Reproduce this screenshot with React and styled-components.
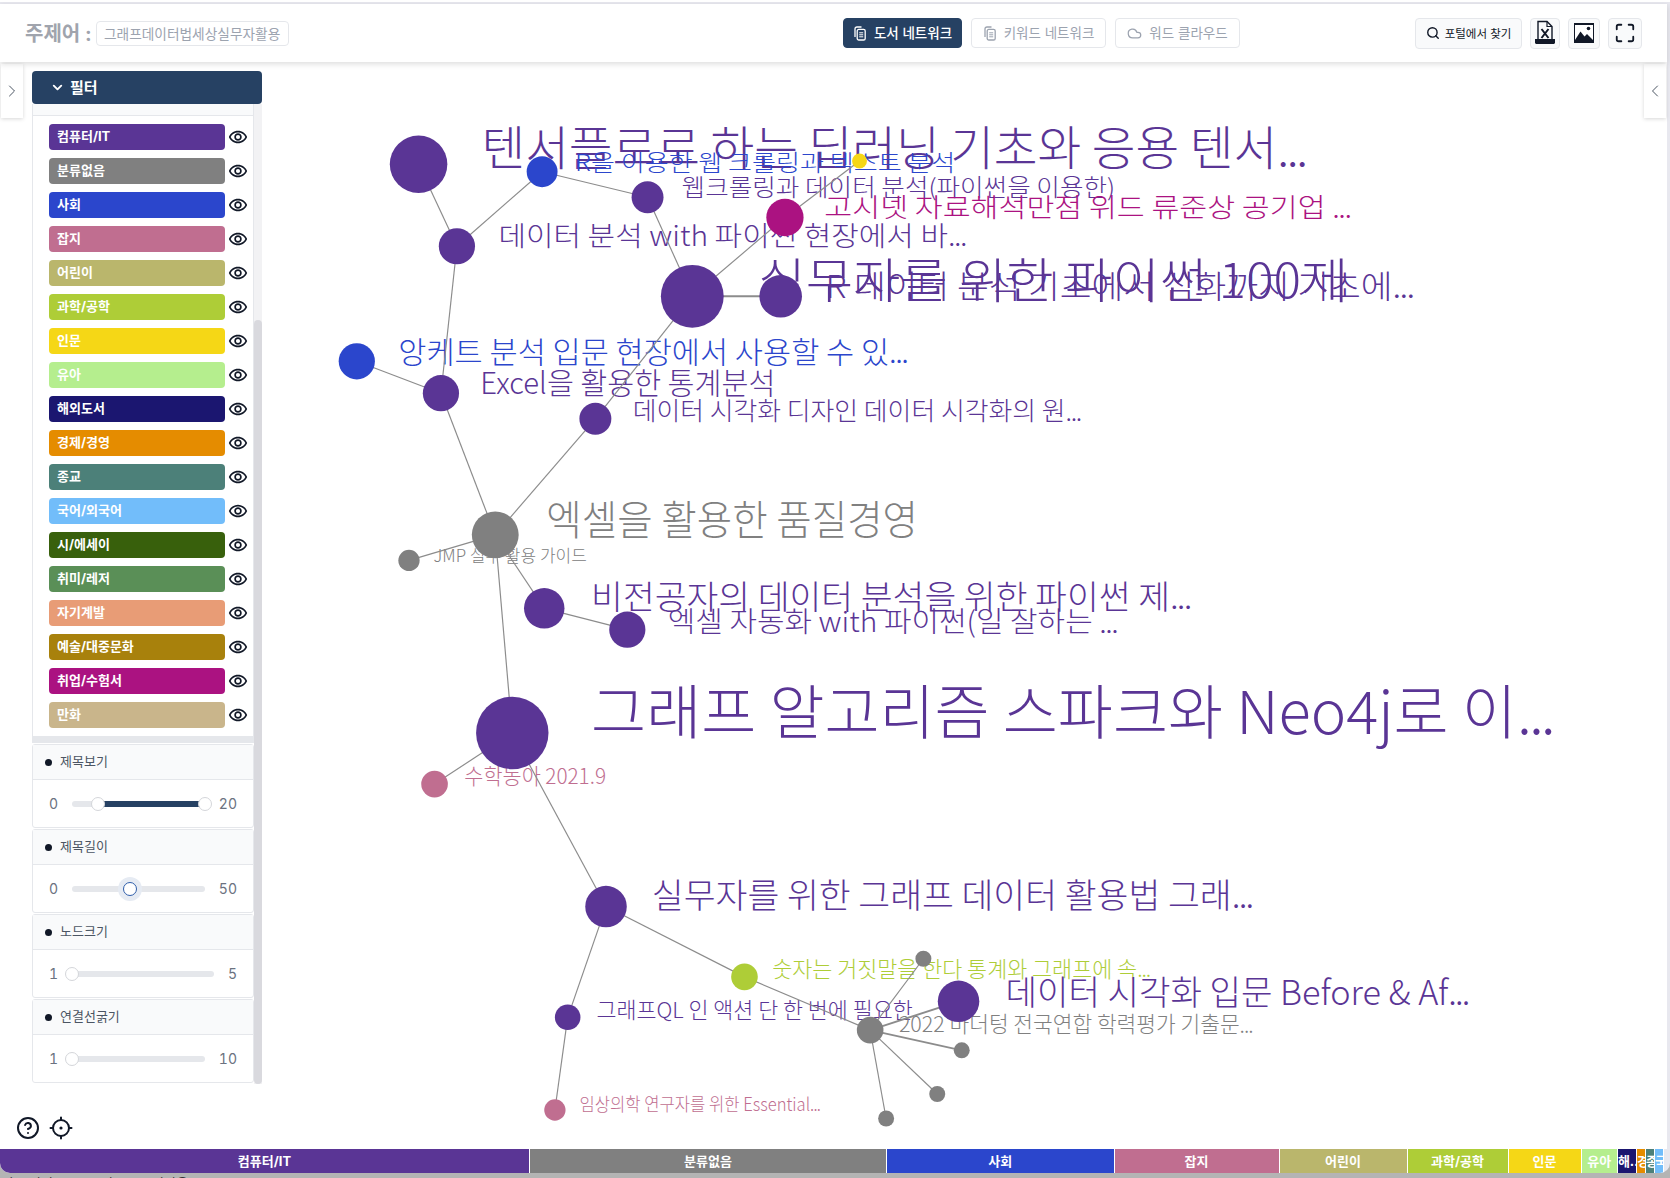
import React from 'react';
import styled, { createGlobalStyle } from 'styled-components';
import { ChevronDown, ChevronLeft, ChevronRight, CircleHelp, Cloud, Maximize, Search } from 'lucide-react';
import { MdOutlineRemoveRedEye } from 'react-icons/md';

const NAVY = '#264163';
const FONT = '"Inter", "Noto Sans CJK KR", sans-serif';

const CATEGORIES = [
  { name: '컴퓨터/IT', color: '#5a3595', width: 530 },
  { name: '분류없음', color: '#808080', width: 357 },
  { name: '사회', color: '#2b46cc', width: 227.5 },
  { name: '잡지', color: '#c06e90', width: 165 },
  { name: '어린이', color: '#bab66c', width: 128 },
  { name: '과학/공학', color: '#aecd37', width: 101 },
  { name: '인문', color: '#f5d716', width: 73 },
  { name: '유아', color: '#b5ee8e', width: 36.4 },
  { name: '해외도서', color: '#1b1670', width: 19 },
  { name: '경제/경영', color: '#e58c00', width: 9 },
  { name: '종교', color: '#4c8079', width: 9 },
  { name: '국어/외국어', color: '#72bdfa', width: 9 },
  { name: '시/에세이', color: '#38600c' },
  { name: '취미/레저', color: '#5a8f57' },
  { name: '자기계발', color: '#e89c76' },
  { name: '예술/대중문화', color: '#a8810c' },
  { name: '취업/수험서', color: '#ab1281' },
  { name: '만화', color: '#c9b58b' },
];

const PURPLE = '#5a3595';
const GRAY = '#808080';
const BLUE = '#2b46cc';
const PINK = '#c06e90';

const NODES = {
  a: [393, 154, 27, PURPLE], b: [429, 231, 17, PURPLE], c: [509, 161, 14.5, BLUE],
  d: [608, 185, 15, PURPLE], e: [650, 278, 29.5, PURPLE], f: [733, 278, 20, PURPLE],
  g: [737, 204, 17.5, '#ab1281'], h: [807, 151, 7, '#f5d716'], i: [335, 339, 17, BLUE],
  j: [414, 369, 17, PURPLE], k: [559, 393, 15, PURPLE], l: [465, 502, 22, GRAY],
  m: [384, 526, 10, GRAY], n: [511, 571, 19, PURPLE], o: [589, 591, 17, PURPLE],
  p: [481, 688, 34, PURPLE], q: [408, 736, 12.5, PINK], r: [569, 851, 19.5, PURPLE],
  s: [699, 917, 12.5, '#aecd37'], t: [533, 955, 12, PURPLE], u: [521, 1042, 10, PINK],
  v: [817, 967, 12.5, GRAY], w: [900, 940, 19.5, PURPLE], x: [867, 900, 7.5, GRAY],
  y: [903, 986, 7.5, GRAY], z: [880, 1027, 7.5, GRAY], aa: [832, 1050, 7.5, GRAY],
};

const EDGES = [
  ['a', 'b'], ['b', 'c'], ['c', 'd'], ['d', 'e'], ['e', 'f', 2], ['e', 'g'], ['g', 'h'], ['b', 'j'],
  ['i', 'j'], ['j', 'l'], ['e', 'k'], ['k', 'l'], ['l', 'm'], ['l', 'n'], ['n', 'o'], ['l', 'p'],
  ['p', 'q'], ['p', 'r'], ['r', 't'], ['t', 'u'], ['r', 's'], ['s', 'v'], ['v', 'w', 1.8],
  ['v', 'x'], ['v', 'y', 1.6], ['v', 'z'], ['v', 'aa'],
];

// x from, x to, vertical centre, font size
const LABELS = [
  ['텐서플로로 하는 딥러닝 기초와 응용 텐서...', 452, 1226, 138, 44, PURPLE],
  ['R을 이용한 웹 크롤링과 텍스트 분석', 540, 897, 152, 21, BLUE],
  ['웹크롤링과 데이터 분석(파이썬을 이용한)', 640, 1047, 176, 22, PURPLE],
  ['고시넷 자료해석만점 위드 류준상 공기업 ...', 774, 1268, 194, 25, '#ab1281'],
  ['데이터 분석 with 파이썬 현장에서 바...', 468, 907, 221, 26, PURPLE],
  ['실무자를 위한 파이썬 100제', 712, 1266, 262, 45, PURPLE],
  ['R 데이터 분석 기초에서 심화까지 기초에...', 775, 1327, 268, 30, PURPLE],
  ['앙케트 분석 입문 현장에서 사용할 수 있...', 374, 852, 330, 28, BLUE],
  ['Excel을 활용한 통계분석', 451, 728, 359, 28, PURPLE],
  ['데이터 시각화 디자인 데이터 시각화의 원...', 594, 1015, 385, 24, PURPLE],
  ['엑셀을 활용한 품질경영', 513, 862, 488, 38, GRAY],
  ['JMP 실무 활용 가이드', 407, 551, 521, 16, GRAY],
  ['비전공자의 데이터 분석을 위한 파이썬 제...', 555, 1118, 560, 31, PURPLE],
  ['엑셀 자동화 with 파이썬(일 잘하는 ...', 627, 1049, 583, 27, PURPLE],
  ['그래프 알고리즘 스파크와 Neo4j로 이...', 555, 1458, 667, 56, PURPLE],
  ['수학동아 2021.9', 436, 569, 728, 20, PINK],
  ['실무자를 위한 그래프 데이터 활용법 그래...', 612, 1176, 840, 32, PURPLE],
  ['숫자는 거짓말을 한다 통계와 그래프에 속...', 725, 1080, 909, 20, '#aecd37'],
  ['데이터 시각화 입문 Before & Af...', 944, 1379, 931, 32, PURPLE],
  ['그래프QL 인 액션 단 한 번에 필요한', 560, 857, 948, 20, PURPLE],
  ['2022 마더텅 전국연합 학력평가 기출문...', 844, 1176, 961, 20, GRAY],
  ['임상의학 연구자를 위한 Essential...', 544, 770, 1036, 17, PINK],
];

const SLIDERS = [
  { title: '제목보기', min: 0, max: 20, from: 19.4, to: 100 },
  { title: '제목길이', min: 0, max: 50, to: 43.8, focused: true },
  { title: '노드크기', min: 1, max: 5, to: 0 },
  { title: '연결선굵기', min: 1, max: 10, to: 0 },
];

const GlobalStyle = createGlobalStyle`
  html, body { margin: 0; height: 100%; }
  body { font-family: ${FONT}; background: #b4b4b4; overflow: hidden; }
  * { box-sizing: border-box; }
`;

const Page = styled.div`
  width: 1670px;
  height: 1178px;
  display: flex;
  flex-direction: column;
  overflow: hidden;
`;

const Frame = styled.div`
  height: 1173px;
  display: flex;
  flex-direction: column;
  background: #e8e8ef;
  border-top: 2px solid #fff;
  padding: 2px 3px 0 0;
  border-radius: 0 0 10px 10px;
  overflow: hidden;
`;

const Header = styled.header`
  height: 58px;
  flex: none;
  display: flex;
  align-items: center;
  padding: 0 25px;
  background: #fff;
  box-shadow: 0 2px 6px rgba(0, 0, 0, 0.14);
  position: relative;
  z-index: 2;
`;

const Title = styled.span`
  font-size: 20px;
  font-weight: 700;
  color: #a0a4ad;
  margin-right: 4px;
  padding-bottom: 2px;
`;

const Chip = styled.span`
  height: 25px;
  width: 193px;
  display: flex;
  align-items: center;
  justify-content: center;
  padding-bottom: 1px;
  border: 1px solid #e5e7eb;
  border-radius: 4px;
  font-size: 13.7px;
  color: #9ca3af;
`;

const TabGroup = styled.div`
  display: flex;
  gap: 9px;
  margin-left: auto;
  margin-right: 175px;
`;

const Tab = styled.button`
  width: ${p => p.$width}px;
  height: 30px;
  padding: 0 0 3px;
  display: flex;
  align-items: center;
  justify-content: center;
  gap: 7px;
  border: 1px solid ${p => (p.$active ? NAVY : '#e5e7eb')};
  border-radius: 4px;
  background: ${p => (p.$active ? NAVY : '#fff')};
  color: ${p => (p.$active ? '#fff' : '#9ca3af')};
  font: ${p => (p.$active ? 500 : 400)} 13.5px ${FONT};

  svg {
    margin-top: 3px;
  }
`;

const Tools = styled.div`
  display: flex;
  gap: 8px;
`;

const ToolButton = styled.button`
  width: ${p => p.$width}px;
  height: 31px;
  padding: 0;
  display: flex;
  align-items: center;
  justify-content: center;
  gap: 5px;
  border: 1px solid #e5e7eb;
  border-radius: 4px;
  background: #f9fafb;
  color: #111827;
  font: 400 11.5px ${FONT};
`;

const Main = styled.main`
  flex: 1;
  min-height: 0;
  display: flex;
  background: #fff;
  position: relative;
`;

const Toggle = styled.div`
  position: absolute;
  top: 2px;
  ${p => (p.$right ? 'right: 1px;' : 'left: 1px;')}
  width: 22px;
  height: 54px;
  display: flex;
  align-items: center;
  justify-content: center;
  background: #fff;
  box-shadow: 0 1px 4px rgba(0, 0, 0, 0.16);
  color: #4b5563;
  z-index: 1;
`;

const Sidebar = styled.aside`
  width: 270px;
  flex: none;
  padding-top: 9px;
  display: flex;
  flex-direction: column;
`;

const FilterBar = styled.div`
  width: 230px;
  height: 33px;
  margin-left: 32px;
  flex: none;
  display: flex;
  align-items: center;
  gap: 5px;
  padding: 0 0 3px 18px;
  background: ${NAVY};
  border-radius: 4px;
  color: #fff;
  font-size: 15px;
  font-weight: 700;

  svg {
    margin-top: 3px;
  }
`;

const ScrollArea = styled.div`
  width: 230px;
  height: 980px;
  margin-left: 32px;
  flex: none;
  display: flex;
`;

const ScrollContent = styled.div`
  width: 222px;
  flex: none;
  display: flex;
  flex-direction: column;
`;

const ScrollTrack = styled.div`
  flex: 1;
  display: flex;
  background: #f2f2f4;
`;

const ScrollThumb = styled.div`
  flex: 1;
  margin-top: 216px;
  background: #d9d9de;
  border-radius: 4px;
`;

const ListHead = styled.div`
  height: 12px;
  flex: none;
  background: #f9fafb;
  border: 1px solid #e5e7eb;
  border-width: 0 1px 1px;
`;

const CategoryList = styled.ul`
  margin: 0 0 1px;
  padding: 8px 0 8px 16px;
  list-style: none;
  display: flex;
  flex-direction: column;
  gap: 8px;
  border: 1px solid #e5e7eb;
  border-width: 0 1px 7px;
`;

const CategoryRow = styled.li`
  display: flex;
  align-items: center;
  gap: 3px;
  color: #111827;
`;

const Pill = styled.span`
  width: 176px;
  height: 26px;
  display: flex;
  align-items: center;
  padding: 0 0 3px 8px;
  border-radius: 4px;
  background: ${p => p.$color};
  color: #fff;
  font-size: 13px;
  font-weight: 700;
`;

const SliderCard = styled.section`
  height: 84px;
  flex: none;
  margin-bottom: 1px;
  border: 1px solid #e5e7eb;
  border-radius: 3px;
  display: flex;
  flex-direction: column;
`;

const SliderHead = styled.div`
  height: 35px;
  flex: none;
  display: flex;
  align-items: center;
  gap: 8px;
  padding-left: 12px;
  background: #f9fafb;
  border-bottom: 1px solid #e5e7eb;
  font-size: 13px;
  color: #4b5563;

  span {
    padding-bottom: 3px;
  }

  &::before {
    content: '';
    width: 7px;
    height: 7px;
    border-radius: 50%;
    background: #111827;
  }
`;

const SliderBody = styled.div`
  flex: 1;
  display: flex;
  align-items: center;
  gap: 14px;
  padding: 0 16px;
  font-size: 14px;
  font-variant-numeric: tabular-nums;
  color: #6b7280;
`;

const Track = styled.div`
  flex: 1;
  height: 6px;
  border-radius: 3px;
  background: #e5e7eb;
  position: relative;
`;

const Range = styled.div`
  position: absolute;
  top: 0;
  bottom: 0;
  background: ${NAVY};
`;

const Knob = styled.div`
  position: absolute;
  top: 50%;
  width: 14px;
  height: 14px;
  border-radius: 50%;
  transform: translate(-50%, -50%);
  background: #fff;
  border: 1px solid ${p => (p.$focused ? '#2f5eaa' : '#d4d6da')};
  box-shadow: ${p => (p.$focused ? '0 0 0 5px #e6ebf3' : 'none')};
`;

const HelpRow = styled.div`
  display: flex;
  align-items: center;
  gap: 9px;
  margin-top: 32px;
  padding-left: 16px;
  color: #111827;
`;

const GraphArea = styled.svg`
  flex: 1;
  display: block;
  font-family: "Noto Sans CJK KR", "Noto Sans", sans-serif;
`;

const GraphLabel = styled.text`
  dominant-baseline: central;
  font-weight: 300;
`;

const CategoryBar = styled.div`
  height: 24px;
  width: 1664px;
  flex: none;
  display: flex;
  background: #fff;
`;

const BarSegment = styled.div`
  flex: none;
  overflow: hidden;
  white-space: nowrap;
  text-align: ${p => (p.$narrow ? 'left' : 'center')};
  text-overflow: ${p => (p.$narrow ? 'clip' : 'ellipsis')};
  background: ${p => p.$color};
  border-right: 1px solid #fff;
  color: #fff;
  font-size: 13px;
  font-weight: 700;
  line-height: 25px;
`;

const StatusLine = styled.div`
  height: 5px;
  flex: none;
  padding: 2px 0 0 2px;
  overflow: hidden;
  font-size: 13px;
  line-height: 16px;
  color: #111;
`;

const BooksIcon = () => (
  <svg width="14" height="15" viewBox="0 0 14 15" fill="none" stroke="currentColor" strokeWidth="1.3">
    <path d="M2 11V3C2 1.8 2.8 1 4 1H8.5" />
    <rect x="4.2" y="3.4" width="8" height="10.6" rx="1.6" />
    <path d="M6.2 6.8H10.2M6.2 8.8H10.2M6.2 10.8H10.2" strokeWidth="1" />
  </svg>
);

const ExcelIcon = () => (
  <svg width="20" height="26" viewBox="0 0 20 26">
    <path d="M3 19V1.5H12L17 6.5V19" fill="none" stroke="#111827" strokeWidth="1.4" />
    <path d="M12 1.5V6.5H17" fill="none" stroke="#111827" strokeWidth="1.2" />
    <path d="M6.5 9L13.5 18M13.5 9L6.5 18" fill="none" stroke="#111827" strokeWidth="2" />
    <path d="M0 19H20V22.5C20 23.3 19.3 24 18.5 24H1.5C0.7 24 0 23.3 0 22.5Z" fill="#111827" />
  </svg>
);

const PictureIcon = () => (
  <svg width="20" height="20" viewBox="0 0 20 20">
    <rect x="0.5" y="0.5" width="19" height="19" fill="#fff" stroke="#111827" />
    <rect x="0" y="0" width="20" height="2" fill="#111827" />
    <circle cx="14.5" cy="5.5" r="1.8" fill="#111827" />
    <path d="M0 18.5L6.5 8.5L10.5 13.5L13 11L20 18V20H0Z" fill="#111827" />
  </svg>
);

const CrosshairIcon = () => (
  <svg width="24" height="24" viewBox="0 0 24 24" fill="none" stroke="currentColor" strokeWidth="2" strokeLinecap="round">
    <circle cx="12" cy="12" r="8" />
    <path d="M12 1.5V4M12 20V22.5M1.5 12H4M20 12H22.5" />
    <circle cx="12" cy="12" r="1.6" fill="currentColor" stroke="none" />
  </svg>
);

const Slider = ({ title, min, max, from, to, focused }) => (
  <SliderCard>
    <SliderHead><span>{title}</span></SliderHead>
    <SliderBody>
      <span>{min}</span>
      <Track>
        {from !== undefined && <Range style={{ left: `${from}%`, right: `${100 - to}%` }} />}
        {from !== undefined && <Knob style={{ left: `${from}%` }} />}
        <Knob $focused={focused} style={{ left: `${to}%` }} />
      </Track>
      <span>{max}</span>
    </SliderBody>
  </SliderCard>
);

const Graph = () => (
  <GraphArea viewBox="253.5 58 1311.7 1020" preserveAspectRatio="xMinYMin meet">
    {LABELS.map(([text, x1, x2, y, size, color]) => (
      <GraphLabel
        key={text}
        x={x1}
        y={y - size * 0.05}
        fontSize={size}
        fill={color}
        textLength={x2 - x1}
        lengthAdjust="spacingAndGlyphs"
      >
        {text.endsWith('...') ? text.slice(0, -3) : text}
        {text.endsWith('...') && <tspan letterSpacing="-0.05em">...</tspan>}
      </GraphLabel>
    ))}
    {EDGES.map(([from, to, width = 1.1]) => (
      <line
        key={from + to}
        x1={NODES[from][0]}
        y1={NODES[from][1]}
        x2={NODES[to][0]}
        y2={NODES[to][1]}
        stroke="#8c8c8c"
        strokeWidth={width}
      />
    ))}
    {Object.entries(NODES).map(([id, [x, y, r, color]]) => (
      <circle key={id} cx={x} cy={y} r={r} fill={color} />
    ))}
  </GraphArea>
);

export default () => (
  <Page>
    <GlobalStyle />
    <Frame>
      <Header>
        <Title>주제어 :</Title>
        <Chip>그래프데이터법세상실무자활용</Chip>
        <TabGroup>
          <Tab $active $width={119}><BooksIcon />도서 네트워크</Tab>
          <Tab $width={135}><BooksIcon />키워드 네트워크</Tab>
          <Tab $width={125}><Cloud size={15} />워드 클라우드</Tab>
        </TabGroup>
        <Tools>
          <ToolButton $width={107}><Search size={14} strokeWidth={2.4} />포털에서 찾기</ToolButton>
          <ToolButton $width={30}><ExcelIcon /></ToolButton>
          <ToolButton $width={32}><PictureIcon /></ToolButton>
          <ToolButton $width={34}><Maximize size={22} strokeWidth={2} /></ToolButton>
        </Tools>
      </Header>
      <Main>
        <Toggle><ChevronRight size={20} strokeWidth={1.2} /></Toggle>
        <Toggle $right><ChevronLeft size={20} strokeWidth={1.2} /></Toggle>
        <Sidebar>
          <FilterBar><ChevronDown size={15} strokeWidth={3} />필터</FilterBar>
          <ScrollArea>
            <ScrollContent>
              <ListHead />
              <CategoryList>
                {CATEGORIES.map(c => (
                  <CategoryRow key={c.name}>
                    <Pill $color={c.color}>{c.name}</Pill>
                    <MdOutlineRemoveRedEye size={20} />
                  </CategoryRow>
                ))}
              </CategoryList>
              {SLIDERS.map(s => <Slider key={s.title} {...s} />)}
            </ScrollContent>
            <ScrollTrack><ScrollThumb /></ScrollTrack>
          </ScrollArea>
          <HelpRow>
            <CircleHelp size={24} />
            <CrosshairIcon />
          </HelpRow>
        </Sidebar>
        <Graph />
      </Main>
      <CategoryBar>
        {CATEGORIES.filter(c => c.width).map(c => (
          <BarSegment key={c.name} $color={c.color} $narrow={c.width < 10} style={{ width: c.width }}>
            {c.name}
          </BarSegment>
        ))}
      </CategoryBar>
    </Frame>
    <StatusLine>많은 사람들 · 01 · 리그스 구상사용</StatusLine>
  </Page>
);
